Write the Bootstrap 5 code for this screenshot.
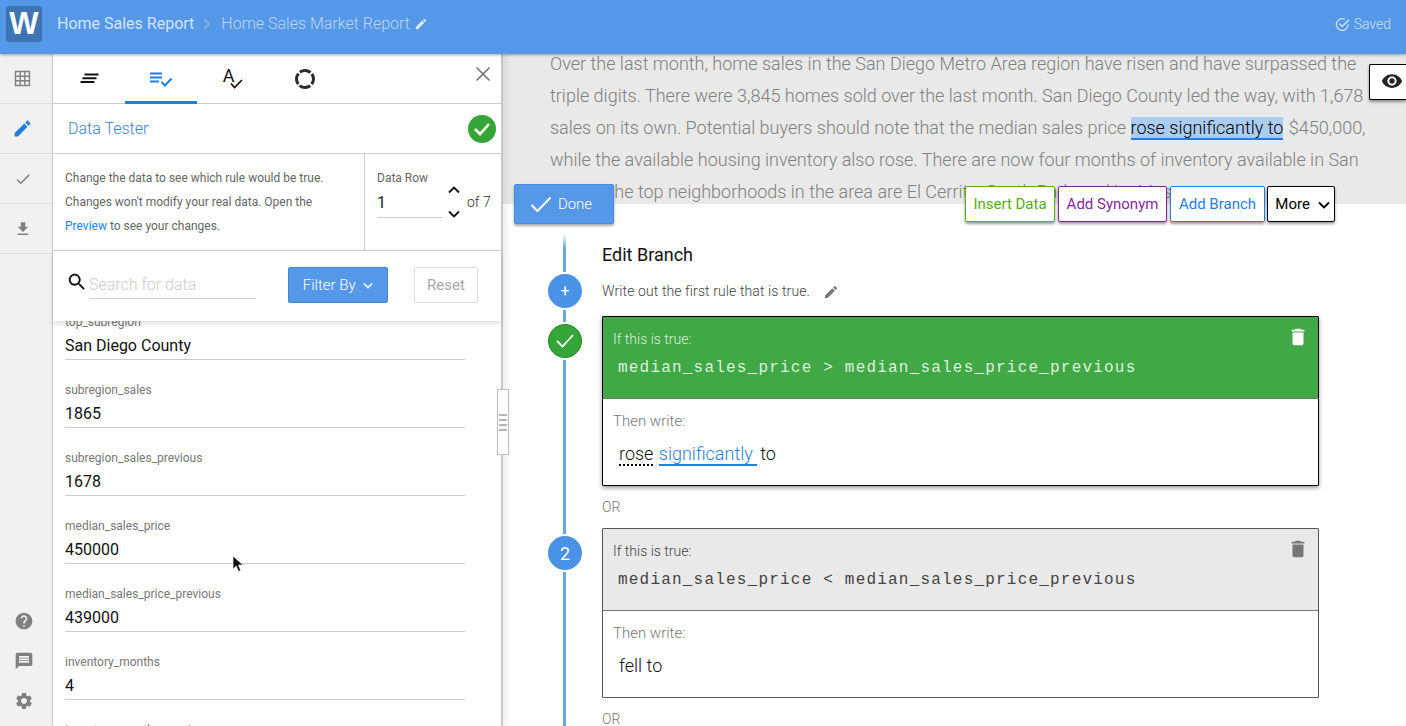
<!DOCTYPE html>
<html lang="en">
<head>
<meta charset="utf-8">
<title>Home Sales Market Report</title>
<link rel="stylesheet" href="https://cdn.jsdelivr.net/npm/bootstrap@5.3.0/dist/css/bootstrap.min.css">
<style>
html,body{height:100%;overflow:hidden}
body{font-family:Roboto,"Liberation Sans",sans-serif;color:#111;background:#fff}
.app-shell{height:726px;width:1406px;overflow:hidden}
.app-top{height:54px;padding-bottom:6px;background:#5598e8;color:#fff;box-shadow:0 1px 3px rgba(0,0,0,.35);z-index:5;flex:none}
.logo-box{width:36px;height:36px;margin:0 15px 0 6px;background:#3d74b2;border-radius:3px;font:700 31px/36px "Liberation Sans",sans-serif;text-align:center;color:#fff}
.crumb{font-size:16px;color:#d3e4f9}
.crumb-2{color:#bdd6f5;font-weight:300}
.crumb-sep{margin:0 10px 0 9px}
.saved-tag{font-size:14px;font-weight:300;color:#cfe1f8;margin-right:15px}
.app-main{height:672px}
.side-rail{width:53px;flex:none;background:#f1f1f1;border-right:1px solid #ccc;color:#808080}
.rail-cell{height:50px;padding-right:7px;border-bottom:1px solid #e2e2e2}
.rail-foot{margin-bottom:15px;padding-right:4px;gap:20px}
.rail-on{color:#1f7fe0}
.tool-panel{width:450px;flex:none;border-right:2px solid #c8c8c8;box-shadow:3px 0 8px rgba(0,0,0,.08);background:#fff;z-index:2;position:relative}
.tab-row{height:50px;border-bottom:1px solid #ccc}
.tab-item{width:72px;height:49px}
.tab-on{border-bottom:3px solid #1f7fe0;height:50px;padding-top:3px;color:#1f7fe0}
.tab-a{font-size:18px;line-height:1;margin-right:-4px;margin-top:-5px}
.tab-tick{margin-top:11px}
.close-x{right:10px;top:12px;color:#777}
.tester-row{height:50px;padding:0 5px 0 15px;border-bottom:1px solid #ccc;color:#3b82d0;font-size:16px;font-weight:300}
.ok-badge{width:28px;height:28px;border-radius:50%;background:#35a537}
.info-row{height:97px;border-bottom:1px solid #ccc}
.info-copy{width:312px;padding:12px 12px;font-size:12px;line-height:24px;color:#666;border-right:1px solid #ccc}
.info-copy a{color:#1f7fe0;text-decoration:none}
.row-box{padding:16px 0 0 12px;width:136px}
.row-label{font-size:12px;line-height:16px;color:#666}
.row-input{width:65px;height:28px;font-size:16px;line-height:26px;color:#222;border-bottom:1px solid #ccc;margin-top:3px}
.row-step{margin-left:6px;width:12px;gap:16px}
.row-of{font-size:14px;font-weight:300;margin-left:7px;color:#333}
.filter-row{height:70px;padding:16px 0 0 13px;box-shadow:0 3px 5px rgba(0,0,0,.12);position:relative;z-index:2;background:#fff}
.search-box{width:167px;height:32px;margin-left:1px;margin-right:32px;font-size:16px;line-height:36px;color:#ccc;border-bottom:1px solid #ccc;font-weight:300}
.btn-filter{width:100px;height:36px;padding:0;background:#5598e8;border:1px solid #3f86de;color:#fff;font-size:15px;font-weight:300;border-radius:2px}
.btn-reset{width:64px;height:36px;padding:0;margin-left:26px;background:#fff;border:1px solid #ddd;color:#a8a8a8;font-size:15px;border-radius:2px}
.data-scroll{height:405px;overflow:hidden;padding:0 36px 0 12px}
.data-stack{margin-top:-29px}
.data-item{height:68px;border-bottom:1px solid #ccc;padding-top:22px}
.data-label{font-size:12px;line-height:16px;color:#777}
.data-value{font-size:16px;line-height:24px;margin-top:4px;color:#111}
.mouse-tip{left:179px;top:501px;z-index:3}
.grip-handle{left:444px;top:335px;width:12px;height:66px;background:#fff;border:1px solid #bbb;z-index:4;gap:3px}
.grip-handle i{display:block;width:8px;height:2px;background:#b5b5b5}
.work-area{min-width:0;background:#fff}
.copy-band{height:150px;overflow:hidden;background:#e9e9e9;padding-left:47px}
.copy-text{margin:-6px 0 0;font-size:18px;font-weight:300;line-height:32px;color:#808080;white-space:nowrap}
.pick-text{color:#000;background:#abcdf3;border-bottom:2px solid #1f7fe0;margin-right:1px}
.eye-btn{right:0;top:10px;width:37px;height:36px;padding:0 0 2px 8px!important;background:#fff;border:1px solid #000;border-right:0;border-radius:2px 0 0 2px;box-shadow:0 2px 3px rgba(0,0,0,.4);z-index:3}
.done-btn{left:11px;top:130px;width:100px;height:40px;padding:0 6px 0 0;background:#5598e8;border:1px solid #4a8de0;color:#fff;font-size:15px;font-weight:300;border-radius:2px;box-shadow:0 2px 3px rgba(0,0,0,.35);z-index:3;gap:6px}
.act-row{left:462px;top:132px;gap:3px;z-index:3}
.act-btn{height:36px;padding:0;background:#fff;font-size:15px;border-radius:2px;box-shadow:0 2px 3px rgba(0,0,0,.4);border-width:1px;border-style:solid}
.act-data{width:90px;color:#55ad0e;border-color:#55b500}
.act-syn{width:109px;color:#8a1f9c;border-color:#8a1f9c}
.act-branch{width:95px;color:#1f7fe0;border-color:#1f7fe0}
.act-more{width:68px;margin-left:-1px;padding-left:3px;color:#000;border-color:#000}
.edit-pane{padding:32px 87px 0 99px;height:522px;overflow:hidden}
.edit-pane::before{content:"";position:absolute;left:60px;top:30px;bottom:0;width:3px;background:linear-gradient(#6aa5ea00,#6aa5ea 14px)}
.pane-title{font-size:18px;line-height:24px;margin-top:7px;color:#111}
.pane-note{font-size:14px;font-weight:300;letter-spacing:.1px;line-height:24px;margin-top:12px;margin-bottom:13px;color:#444}
.note-pen{margin-left:13px;color:#777}
.tl-node{width:34px;height:34px;border-radius:50%;left:-54px;background:#4a92e6;color:#fff;box-shadow:0 0 0 2px #fff;font-size:18px;z-index:1}
.tl-plus{top:-42px;font-size:16px}
.tl-ok{top:8px;background:#35a537;border:1px solid #1e8e20}
.tl-two{top:8px}
.rule-box{height:170px;border:1px solid #555;border-radius:1px;background:#fff}
.rule-active{border-color:#000;box-shadow:0 2px 4px rgba(0,0,0,.4)}
.rule-head{height:82px;padding:14px 10px 0 10px;background:#e9e9e9;border-bottom:1px solid #777;color:#444}
.rule-active .rule-head{background:#40a845;color:#dff0df}
.rule-cap{font-size:14px;font-weight:300;line-height:16px}
.rule-code{font-family:"Liberation Mono",monospace;font-size:16px;letter-spacing:1.2px;line-height:20px;margin:11px 0 0 5px;white-space:nowrap}
.rule-bin{right:9px;top:9px;color:#777}
.rule-active .rule-bin{color:#fff}
.rule-body{padding:14px 10px 0 10px}
.then-cap{font-size:15px;font-weight:300;line-height:16px;color:#777}
.then-text{font-size:18px;font-weight:300;line-height:24px;margin:13px 0 0 6px;color:#111}
.tok-dot{border-bottom:2px dotted #000}
.tok-syn{color:#1f7fe0;border-bottom:2px solid #1f7fe0;padding-right:4px;margin:0 -1px 0 1px}
.or-mark{height:42px;font-size:14px;font-weight:300;line-height:42px;color:#777}
</style>
</head>
<body>
<svg width="0" height="0" class="d-none" aria-hidden="true">
<defs>
<symbol id="i-pen" viewBox="0 0 24 24"><path fill="currentColor" d="M3 17.25V21h3.75L17.81 9.94l-3.75-3.75L3 17.25zM20.71 7.04c.39-.39.39-1.02 0-1.41l-2.34-2.34c-.39-.39-1.02-.39-1.41 0l-1.83 1.83 3.75 3.75 1.83-1.83z"/></symbol>
<symbol id="i-check" viewBox="0 0 24 24"><path fill="currentColor" d="M9 16.17L4.83 12l-1.42 1.41L9 19 21 7l-1.41-1.41z"/></symbol>
<symbol id="i-down" viewBox="0 0 24 24"><path fill="currentColor" d="M19 9h-4V3H9v6H5l7 7 7-7zM5 18v2h14v-2H5z"/></symbol>
<symbol id="i-help" viewBox="0 0 24 24"><path fill="currentColor" d="M12 2C6.48 2 2 6.48 2 12s4.48 10 10 10 10-4.48 10-10S17.52 2 12 2zm1 17h-2v-2h2v2zm2.07-7.75l-.9.92C13.45 12.9 13 13.5 13 15h-2v-.5c0-1.1.45-2.1 1.17-2.83l1.24-1.26c.37-.36.59-.86.59-1.41 0-1.1-.9-2-2-2s-2 .9-2 2H8c0-2.21 1.79-4 4-4s4 1.79 4 4c0 .88-.36 1.68-.93 2.25z"/></symbol>
<symbol id="i-msg" viewBox="0 0 24 24"><path fill="currentColor" d="M20 2H4c-1.1 0-1.99.9-1.99 2L2 22l4-4h14c1.1 0 2-.9 2-2V4c0-1.1-.9-2-2-2zm-2 12H6v-2h12v2zm0-3H6V9h12v2zm0-3H6V6h12v2z"/></symbol>
<symbol id="i-gear" viewBox="0 0 24 24"><path fill="currentColor" d="M19.14 12.94c.04-.3.06-.61.06-.94 0-.32-.02-.64-.07-.94l2.03-1.58c.18-.14.23-.41.12-.61l-1.92-3.32c-.12-.22-.37-.29-.59-.22l-2.39.96c-.5-.38-1.03-.7-1.62-.94l-.36-2.54c-.04-.24-.24-.41-.48-.41h-3.84c-.24 0-.43.17-.47.41l-.36 2.54c-.59.24-1.13.57-1.62.94l-2.39-.96c-.22-.08-.47 0-.59.22L2.74 8.87c-.12.21-.08.47.12.61l2.03 1.58c-.05.3-.09.63-.09.94s.02.64.07.94l-2.03 1.58c-.18.14-.23.41-.12.61l1.92 3.32c.12.22.37.29.59.22l2.39-.96c.5.38 1.03.7 1.62.94l.36 2.54c.05.24.24.41.48.41h3.84c.24 0 .44-.17.47-.41l.36-2.54c.59-.24 1.13-.56 1.62-.94l2.39.96c.22.08.47 0 .59-.22l1.92-3.32c.12-.22.07-.47-.12-.61l-2.01-1.58zM12 15.6c-1.98 0-3.6-1.62-3.6-3.6s1.62-3.6 3.6-3.6 3.6 1.62 3.6 3.6-1.62 3.6-3.6 3.6z"/></symbol>
<symbol id="i-bin" viewBox="0 0 24 24"><path fill="currentColor" d="M6 19c0 1.1.9 2 2 2h8c1.1 0 2-.9 2-2V7H6v12zM19 4h-3.5l-1-1h-5l-1 1H5v2h14V4z"/></symbol>
<symbol id="i-eye" viewBox="0 0 24 24"><path fill="currentColor" d="M12 4.5C7 4.5 2.73 7.61 1 12c1.73 4.39 6 7.5 11 7.5s9.27-3.11 11-7.5c-1.73-4.39-6-7.5-11-7.5zM12 17c-2.76 0-5-2.24-5-5s2.24-5 5-5 5 2.24 5 5-2.24 5-5 5zm0-8c-1.66 0-3 1.34-3 3s1.34 3 3 3 3-1.34 3-3-1.34-3-3-3z"/></symbol>
<symbol id="i-search" viewBox="0 0 24 24"><path fill="currentColor" d="M15.5 14h-.79l-.28-.27C15.41 12.59 16 11.11 16 9.5 16 5.91 13.09 3 9.5 3S3 5.91 3 9.5 5.91 16 9.5 16c1.61 0 3.09-.59 4.23-1.57l.27.28v.79l5 4.99L20.49 19l-4.99-5zm-6 0C7.01 14 5 11.99 5 9.5S7.01 5 9.5 5 14 7.01 14 9.5 11.99 14 9.5 14z"/></symbol>
<symbol id="i-chev" viewBox="0 0 12 8"><path fill="none" stroke="currentColor" stroke-width="1.8" d="M1 1.5l5 5 5-5"/></symbol>
<symbol id="i-chev-up" viewBox="0 0 12 8"><path fill="none" stroke="currentColor" stroke-width="1.8" d="M1 6.5l5-5 5 5"/></symbol>
</defs>
</svg>

<div class="app-shell d-flex flex-column position-relative">
  <header class="app-top d-flex align-items-center position-relative">
    <div class="logo-box">W</div>
    <span class="crumb">Home Sales Report</span>
    <svg class="crumb-sep" width="8" height="12" viewBox="0 0 8 12"><path fill="none" stroke="#8fbaf0" stroke-width="1.3" d="M1 1l5 5-5 5"/></svg>
    <span class="crumb crumb-2">Home Sales Market Report</span>
    <svg class="ms-1" width="14" height="14" style="color:#dce9fa"><use href="#i-pen"/></svg>
    <div class="ms-auto saved-tag d-flex align-items-center gap-1">
      <svg width="15" height="15" viewBox="0 0 16 16"><path fill="none" stroke="#cfe1f8" stroke-width="1.4" d="M14 7.6V8a6.3 6.3 0 1 1-3.6-5.7"/><path fill="none" stroke="#cfe1f8" stroke-width="1.6" d="M4.8 7.2l3 3L15 3"/></svg>
      <span>Saved</span>
    </div>
  </header>

  <div class="app-main d-flex position-relative">
    <nav class="side-rail d-flex flex-column">
      <div class="rail-cell d-flex align-items-center justify-content-center">
        <svg width="17" height="17" viewBox="0 0 17 17"><path fill="none" stroke="#808080" stroke-width="1.4" d="M1.5 1.5h14v14h-14zM1.5 6.2h14M1.5 10.8h14M6.2 1.5v14M10.8 1.5v14"/></svg>
      </div>
      <div class="rail-cell rail-on d-flex align-items-center justify-content-center"><svg width="21" height="21"><use href="#i-pen"/></svg></div>
      <div class="rail-cell d-flex align-items-center justify-content-center"><svg width="18" height="18"><use href="#i-check"/></svg></div>
      <div class="rail-cell d-flex align-items-center justify-content-center"><svg width="18" height="18"><use href="#i-down"/></svg></div>
      <div class="mt-auto rail-foot d-flex flex-column align-items-center">
        <svg width="20" height="20"><use href="#i-help"/></svg>
        <svg width="20" height="20"><use href="#i-msg"/></svg>
        <svg width="20" height="20"><use href="#i-gear"/></svg>
      </div>
    </nav>

    <aside class="tool-panel d-flex flex-column">
      <div class="tab-row d-flex position-relative">
        <div class="tab-item d-flex align-items-center justify-content-center">
          <svg width="19" height="11" viewBox="0 0 19 11"><path stroke="#111" stroke-width="2" d="M4.500 1.500h14M2.500 5.200h14M.5 8.900h14"/></svg>
        </div>
        <div class="tab-item tab-on d-flex align-items-center justify-content-center">
          <svg width="22" height="15" viewBox="0 0 22 15"><path fill="none" stroke="#1f7fe0" stroke-width="2" d="M0 1.500h12M0 5.500h12M0 9.500h9M11.500 10l3.500 3.500L21.500 6.500"/></svg>
        </div>
        <div class="tab-item d-flex align-items-center justify-content-center">
          <span class="tab-a">A</span>
          <svg class="tab-tick" width="13" height="10" viewBox="0 0 13 10"><path fill="none" stroke="#111" stroke-width="1.6" d="M1 4.500l3.500 4L12 1"/></svg>
        </div>
        <div class="tab-item d-flex align-items-center justify-content-center">
          <svg width="20" height="20" viewBox="0 0 20 20"><circle cx="10" cy="10" r="8.500" fill="none" stroke="#2a2a2a" stroke-width="3" stroke-dasharray="11.350 2" stroke-dashoffset="5.670"/></svg>
        </div>
        <svg class="close-x position-absolute" width="16" height="16" viewBox="0 0 16 16"><path stroke="currentColor" stroke-width="1.7" d="M1.500 1.500l13 13M14.500 1.500l-13 13"/></svg>
      </div>

      <div class="tester-row d-flex align-items-center justify-content-between">
        <span>Data Tester</span>
        <span class="ok-badge d-flex align-items-center justify-content-center">
          <svg width="18" height="14" viewBox="0 0 18 14"><path fill="none" stroke="#fff" stroke-width="2.600" d="M2 7l5 5 9-10"/></svg>
        </span>
      </div>

      <div class="info-row d-flex">
        <div class="info-copy">Change the data to see which rule would be true.<br>Changes won't modify your real data. Open the<br><a href="#">Preview</a> to see your changes.</div>
        <div class="row-box">
          <div class="row-label">Data Row</div>
          <div class="d-flex align-items-center">
            <div class="row-input">1</div>
            <div class="row-step d-flex flex-column"><svg width="12" height="8"><use href="#i-chev-up"/></svg><svg width="12" height="8"><use href="#i-chev"/></svg></div>
            <span class="row-of">of 7</span>
          </div>
        </div>
      </div>

      <div class="filter-row d-flex">
        <svg width="22" height="22" class="mt-1" viewBox="0 0 24 24"><use href="#i-search"/></svg>
        <div class="search-box">Search for data</div>
        <button class="btn btn-filter" type="button">Filter By <svg class="ms-1" width="10" height="7" ><use href="#i-chev"/></svg></button>
        <button class="btn btn-reset" type="button">Reset</button>
      </div>

      <div class="data-scroll">
        <div class="data-stack">
          <div class="data-item"><div class="data-label">top_subregion</div><div class="data-value">San Diego County</div></div>
          <div class="data-item"><div class="data-label">subregion_sales</div><div class="data-value">1865</div></div>
          <div class="data-item"><div class="data-label">subregion_sales_previous</div><div class="data-value">1678</div></div>
          <div class="data-item"><div class="data-label">median_sales_price</div><div class="data-value">450000</div></div>
          <div class="data-item"><div class="data-label">median_sales_price_previous</div><div class="data-value">439000</div></div>
          <div class="data-item"><div class="data-label">inventory_months</div><div class="data-value">4</div></div>
          <div class="data-item"><div class="data-label">inventory_months_previous</div><div class="data-value">3</div></div>
        </div>
      </div>
      <svg class="mouse-tip position-absolute" width="12" height="18" viewBox="0 0 12 18"><path d="M1 1v13l3.200-3 2.300 5.500 2.200-1L6.500 10H11z" fill="#111" stroke="#fff" stroke-width=".6"/></svg>
      <div class="grip-handle position-absolute d-flex flex-column align-items-center justify-content-center">
        <i></i><i></i><i></i><i></i>
      </div>
    </aside>

    <main class="work-area flex-grow-1 position-relative">
      <section class="copy-band">
        <p class="copy-text">Over the last month, home sales in the San Diego Metro Area region have risen and have surpassed the<br>triple digits. There were 3,845 homes sold over the last month. San Diego County led the way, with 1,678<br>sales on its own. Potential buyers should note that the median sales price <span class="pick-text">rose significantly to</span> $450,000,<br>while the available housing inventory also rose. There are now four months of inventory available in San<br>Diego. The top neighborhoods in the area are El Cerrito, South Park, and La Mesa.</p>
      </section>

      <button class="eye-btn btn position-absolute d-flex align-items-center justify-content-center" type="button" aria-label="Preview"><svg width="22" height="22"><use href="#i-eye"/></svg></button>
      <button class="done-btn btn position-absolute d-flex align-items-center justify-content-center" type="button">
        <svg width="22" height="17" viewBox="0 0 22 17"><path fill="none" stroke="#fff" stroke-width="2" d="M1.500 9l6 6L20.500 1.500"/></svg><span>Done</span>
      </button>
      <div class="act-row position-absolute d-flex">
        <button class="btn act-btn act-data" type="button">Insert Data</button>
        <button class="btn act-btn act-syn" type="button">Add Synonym</button>
        <button class="btn act-btn act-branch" type="button">Add Branch</button>
        <button class="btn act-btn act-more" type="button">More <svg class="ms-1" width="12" height="8"><use href="#i-chev"/></svg></button>
      </div>

      <section class="edit-pane position-relative">
        <div class="pane-title">Edit Branch</div>
        <div class="pane-note">Write out the first rule that is true.<svg class="note-pen" width="16" height="16"><use href="#i-pen"/></svg></div>

        <div class="position-relative">
          <span class="tl-node tl-plus position-absolute d-flex align-items-center justify-content-center">+</span>
          <span class="tl-node tl-ok position-absolute d-flex align-items-center justify-content-center">
            <svg width="20" height="16" viewBox="0 0 20 16"><path fill="none" stroke="#fff" stroke-width="1.800" d="M2 8l5.500 5.500L18 2"/></svg>
          </span>
          <article class="rule-box rule-active">
            <div class="rule-head position-relative">
              <div class="rule-cap">If this is true:</div>
              <div class="rule-code">median_sales_price &gt; median_sales_price_previous</div>
              <svg class="rule-bin position-absolute" width="22" height="22"><use href="#i-bin"/></svg>
            </div>
            <div class="rule-body">
              <div class="then-cap">Then write:</div>
              <div class="then-text"><span class="tok-dot">rose</span> <span class="tok-syn">significantly</span> to</div>
            </div>
          </article>
        </div>

        <div class="or-mark">OR</div>

        <div class="position-relative">
          <span class="tl-node tl-two position-absolute d-flex align-items-center justify-content-center">2</span>
          <article class="rule-box">
            <div class="rule-head position-relative">
              <div class="rule-cap">If this is true:</div>
              <div class="rule-code">median_sales_price &lt; median_sales_price_previous</div>
              <svg class="rule-bin position-absolute" width="22" height="22"><use href="#i-bin"/></svg>
            </div>
            <div class="rule-body">
              <div class="then-cap">Then write:</div>
              <div class="then-text">fell to</div>
            </div>
          </article>
        </div>

        <div class="or-mark">OR</div>
      </section>
    </main>
  </div>
</div>
</body>
</html>
